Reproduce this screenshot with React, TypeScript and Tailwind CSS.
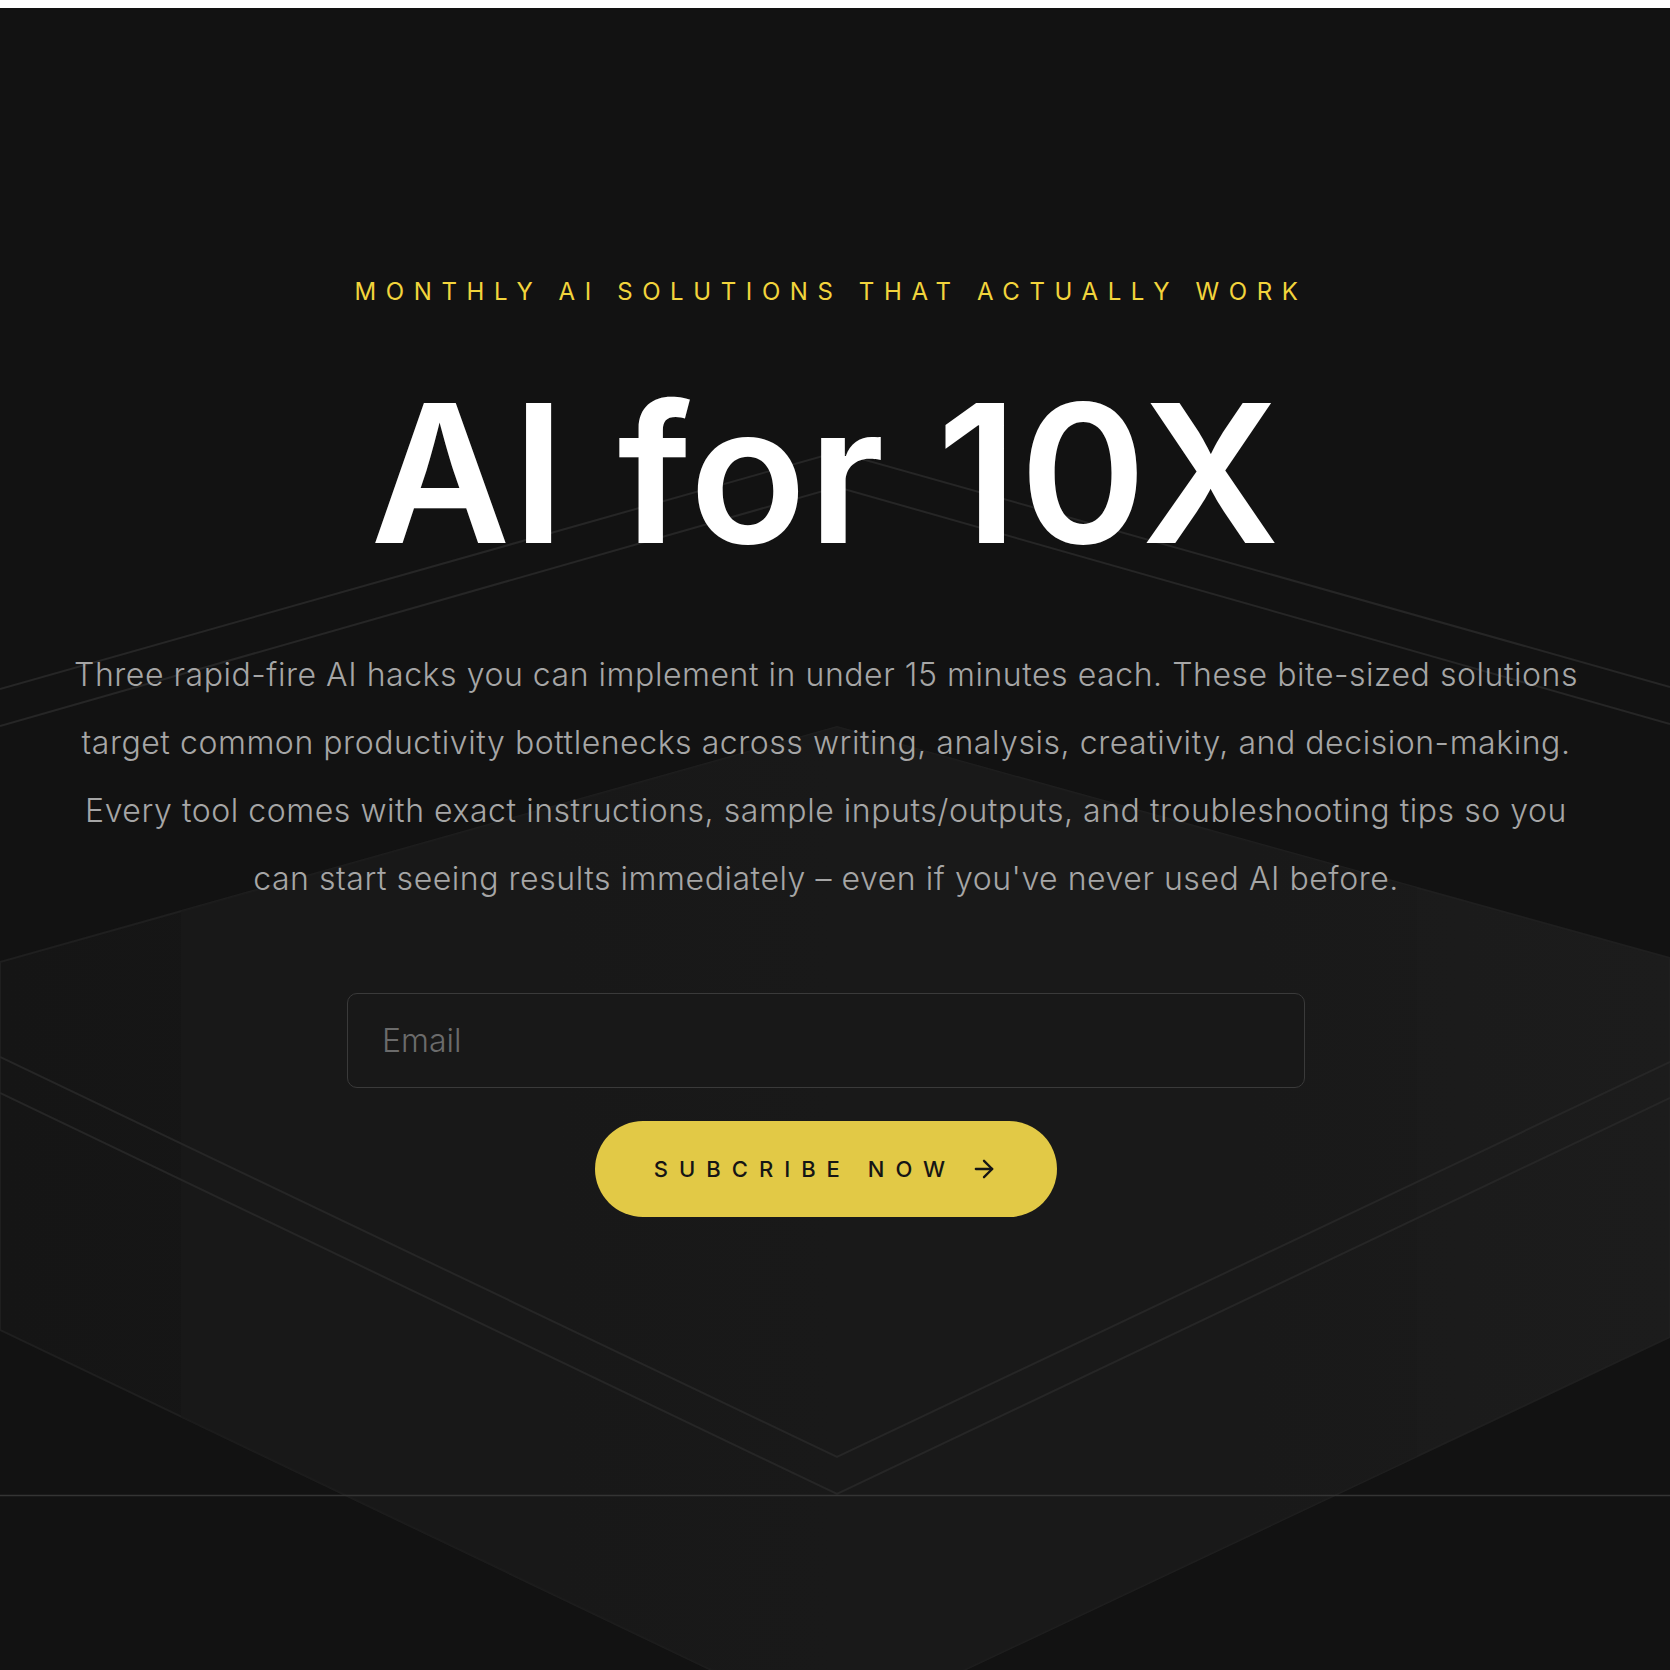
import { ArrowRight } from "lucide-react";

const Backdrop = () => (
  <svg
    className="absolute inset-0 h-full w-full"
    viewBox="0 0 1670 1670"
    preserveAspectRatio="none"
    aria-hidden="true"
  >
    <defs>
      <linearGradient id="hexFill" x1="0" y1="0" x2="1" y2="0">
        <stop offset="0" stopColor="#151515" />
        <stop offset="0.5" stopColor="#181818" />
        <stop offset="1" stopColor="#1c1c1c" />
      </linearGradient>
    </defs>
    <polygon
      points="0,962 837,727 1670,958 1670,1337 837,1730 0,1330"
      fill="url(#hexFill)"
      stroke="#1f1f1f"
      strokeWidth="2"
    />
    <polygon
      points="181,911 837,727 1417,888 1417,1456 837,1730 181,1417"
      fill="#191919"
      opacity="0.7"
    />
    <polyline points="0,689 837,452 1670,687" fill="none" stroke="#262626" strokeWidth="2" />
    <polyline points="0,726 837,487 1670,724" fill="none" stroke="#262626" strokeWidth="2" />
    <polyline points="0,1057 837,1457 1670,1062" fill="none" stroke="#262626" strokeWidth="2" />
    <polyline points="0,1093 837,1494 1670,1098" fill="none" stroke="#262626" strokeWidth="2" />
    <line x1="0" y1="1495.5" x2="1670" y2="1495.5" stroke="#343434" strokeWidth="1.5" />
  </svg>
);

export default function App() {
  return (
    <div
      className="relative h-[1670px] w-full overflow-hidden bg-[#121212]"
      style={{ fontFamily: "Inter, 'Noto Sans', sans-serif" }}
    >
      <div className="h-[8px] w-full bg-white" />
      <Backdrop />

      <main className="relative z-10 flex flex-col items-center pr-[18px] pt-[268px]">
        <p className="h-[32px] pl-[10px] text-[24px] leading-[32px] tracking-[0.4em] text-[#f2d43c]">
          MONTHLY AI SOLUTIONS THAT ACTUALLY WORK
        </p>

        <h1 className="mt-[69px] text-[192px] font-semibold leading-none tracking-[0.01em] text-white">
          AI for 10X
        </h1>

        <p className="mt-[72px] max-w-[1540px] text-center text-[32px] font-light leading-[68px] tracking-[0.017em] text-[#a6a6a6]">
          Three rapid-fire AI hacks you can implement in under 15 minutes each. These
          bite-sized solutions target common productivity bottlenecks across writing,
          analysis, creativity, and decision-making. Every tool comes with exact
          instructions, sample inputs/outputs, and troubleshooting tips so you can start
          seeing results immediately – even if you've never used AI before.
        </p>

        <form className="mt-[80px] flex flex-col items-center" onSubmit={(e) => e.preventDefault()}>
          <input
            type="email"
            placeholder="Email"
            className="h-[95px] w-[958px] rounded-[10px] border border-[#3a3a3a] bg-[#181818] px-[34px] text-[32px] font-light text-white outline-none placeholder:text-[#6b6b6b]"
          />
          <button
            type="submit"
            className="mt-[33px] flex h-[96px] w-[462px] items-center justify-center gap-[14px] rounded-full bg-[#e2c946] text-[22px] font-medium tracking-[0.5em] text-[#151515]"
          >
            <span>SUBCRIBE NOW</span>
            <ArrowRight className="h-[28px] w-[28px]" strokeWidth={2} />
          </button>
        </form>
      </main>
    </div>
  );
}
